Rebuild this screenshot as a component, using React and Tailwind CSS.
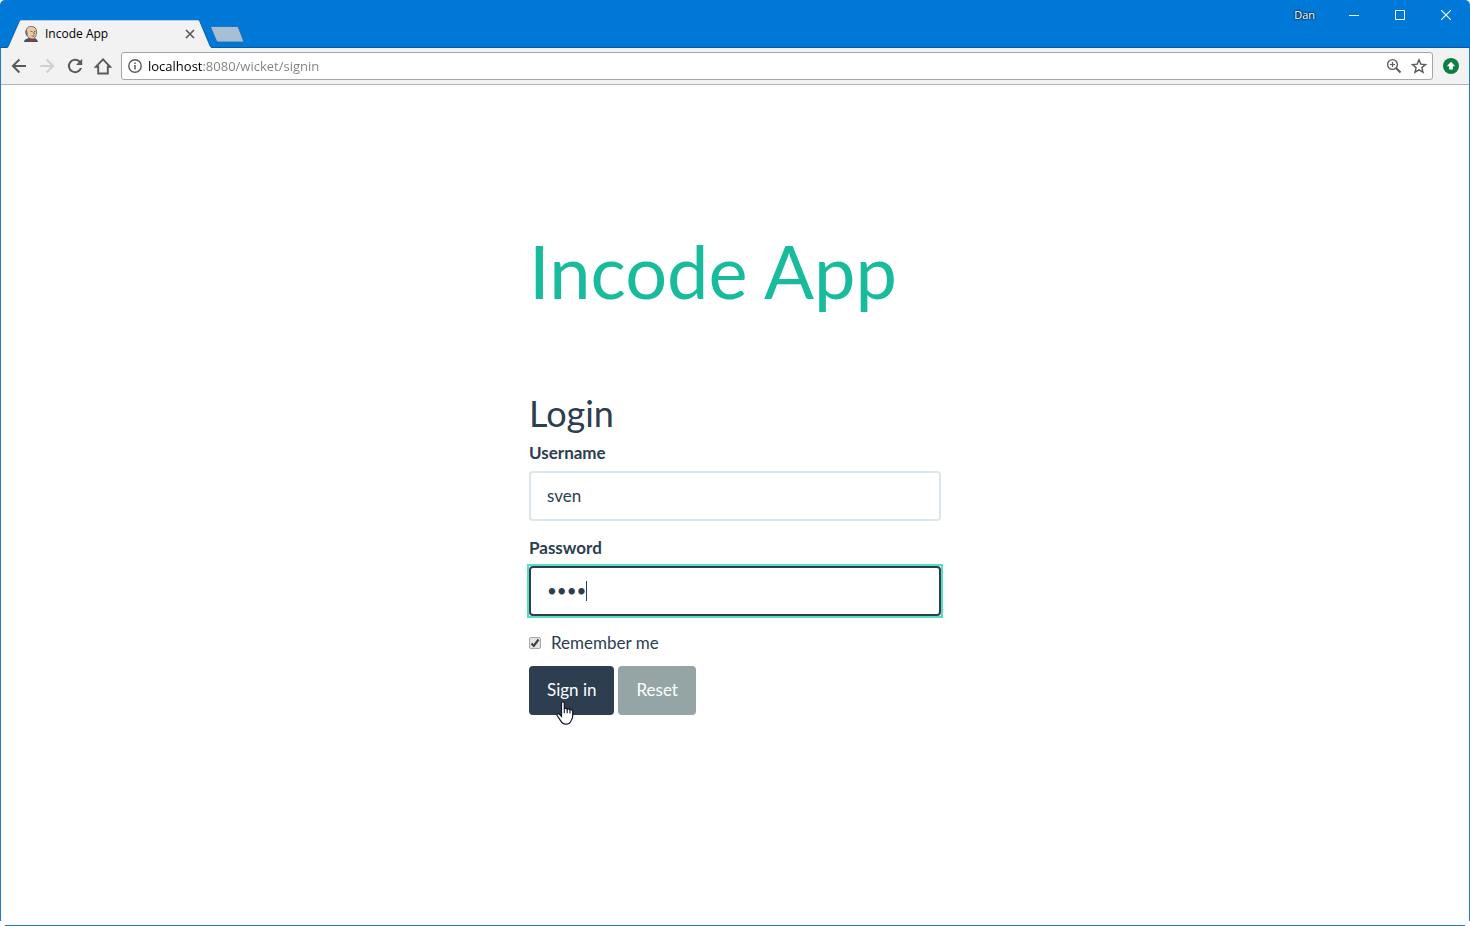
import { useState } from "react";

function TabFavicon() {
  return (
    <svg width="16" height="16" viewBox="0 0 16 16" aria-hidden="true">
      <path d="M1 16c0-2 1.500-3 3.500-3.500l2.500-1 4 .5c2 .5 3.500 1.500 4 4z" fill="#38536b" />
      <path d="M3.500 3.500C4.200 1.300 6 .4 8.300.4c3.200 0 5.200 1.900 5.200 5.300 0 3.600-1 7.300-4.300 7.300C6 13 3.600 10 3.200 7z" fill="#e8cba6" stroke="#4a4038" strokeWidth=".7" />
      <path d="M3.600 3C2.300 3.600 2 5.500 2.400 7.200c.2 1.500 1 2.600 2 3l.3-2.500L4.200 5z" fill="#77706a" />
      <path d="M7.500 5.300l2 .3M11 5.600l1.500-.3M8.500 9.800c1 .6 2.200.6 3.200 0M10.700 6l.6 2-1 .3" fill="none" stroke="#5b4a3d" strokeWidth=".8" />
      <path d="M6.500 12.800l2.600 1.200 2.600-1v3l-2.400-1.200-2.600 1.200z" fill="#d5232b" />
    </svg>
  );
}

function NavIcon({ d, color = "#5a5a5a" }) {
  return (
    <svg width="24" height="24" viewBox="0 0 24 24" aria-hidden="true">
      <path d={d} fill={color} />
    </svg>
  );
}

const paths = {
  back: "M19 11H8.300l4.800-4.800L11.700 4.800 4.500 12l7.200 7.200 1.400-1.400L8.300 13H19z",
  forward: "M5 11h10.700l-4.800-4.800 1.400-1.400 7.200 7.200-7.200 7.200-1.400-1.400 4.800-4.800H5z",
  reload:
    "M17.200 6.800A7.200 7.200 0 1 0 19 14h-2.100A5.200 5.200 0 1 1 15.700 8.300L13 11h6.200V4.800z",
};

function TitleBar() {
  return (
    <header className="flex h-12 items-stretch rounded-t-[5px] border-b border-[#0a5aa6] bg-[#0078d7]">
      <div className="relative mt-5 ml-[6px] -mb-px w-[208px] shrink-0">
        <svg className="absolute inset-0" width="208" height="28" viewBox="0 0 208 28" aria-hidden="true">
          <path d="M0 28c1.500 0 2-.6 2.600-2L13 2C13.500.7 14 0 15.500 0H191.500c1.500 0 2 .7 2.500 2l9.900 24c.6 1.400 1.600 2 3.100 2z" fill="#f2f2f2" />
          <path d="M0 27.500c1.500 0 2-.6 2.600-2L13 2C13.500.7 14-.2 15.500-.2H191.500c1.500 0 2 .9 2.500 2.200l9.900 23.500c.6 1.400 1.600 2 3.100 2" fill="none" stroke="#0a5aa6" strokeWidth=".8" />
        </svg>
        <div className="relative flex h-7 items-center pr-4 pl-[17px]">
          <TabFavicon />
          <span className="ml-[6px] grow text-[12px] leading-4 text-black">Incode App</span>
          <button aria-label="Close tab" className="flex size-4 items-center justify-center">
            <svg width="10" height="10" viewBox="0 0 10 10" aria-hidden="true">
              <path d="M1 1l8 8M9 1L1 9" stroke="#5a5a5a" strokeWidth="1.700" />
            </svg>
          </button>
        </div>
      </div>
      <button aria-label="New tab" className="-ml-1 mb-1 flex h-[17px] self-end">
        <svg width="35" height="17" viewBox="0 0 35 17" aria-hidden="true">
          <path d="M2 .5h24.500c1 0 1.500.3 2 1.200l4.800 12.500c.4 1.200 0 1.800-1 1.800H8.500c-1.200 0-1.800-.4-2.200-1.400L1 2C.6 1 1 .5 2 .5z" fill="#a6bfd4" stroke="#1c6bb0" strokeWidth=".8" />
        </svg>
      </button>
      <div className="mr-px ml-auto flex h-[30px] items-center text-white">
        <button className="mr-4 text-[11px] leading-4 [text-shadow:0_0_2px_#111,0_0_2px_#111]">Dan</button>
        <button aria-label="Minimize" className="flex h-full w-[46px] items-center justify-center">
          <svg width="10" height="10" viewBox="0 0 10 10" aria-hidden="true"><path d="M0 5.500h10" stroke="white" /></svg>
        </button>
        <button aria-label="Maximize" className="flex h-full w-[46px] items-center justify-center">
          <svg width="10" height="10" viewBox="0 0 10 10" aria-hidden="true"><path d="M.5.5h9v9h-9z" fill="none" stroke="white" /></svg>
        </button>
        <button aria-label="Close" className="flex h-full w-[46px] items-center justify-center">
          <svg width="10" height="10" viewBox="0 0 10 10" aria-hidden="true"><path d="M0 0l10 10M10 0L0 10" stroke="white" strokeWidth="1.100" /></svg>
        </button>
      </div>
    </header>
  );
}

function Toolbar() {
  const [url, setUrl] = useState("localhost:8080/wicket/signin");
  return (
    <nav className="flex h-[37px] items-center border-b border-[#b4b4b4] bg-[#f2f2f2] pr-[10px] pl-[6px]">
      <div className="flex w-[114px] gap-1">
        <button aria-label="Back"><NavIcon d={paths.back} /></button>
        <button aria-label="Forward"><NavIcon d={paths.forward} color="#d0d0d0" /></button>
        <button aria-label="Reload"><NavIcon d={paths.reload} /></button>
        <button aria-label="Home">
          <svg width="24" height="24" viewBox="0 0 24 24" aria-hidden="true">
            <path d="M4.800 12.800L12 5.300l7.200 7.500h-2.400v6.700H7.200v-6.700z" fill="none" stroke="#5a5a5a" strokeWidth="1.900" />
          </svg>
        </button>
      </div>
      <div className="flex h-7 grow items-center rounded-[3px] border border-[#a6a6a6] bg-white pr-[5px] pl-[6px]">
        <svg width="14" height="14" viewBox="0 0 14 14" aria-hidden="true">
          <circle cx="7" cy="7" r="6.200" fill="none" stroke="#5a5a5a" strokeWidth="1.400" />
          <path d="M7 6v4.500M7 3.500v1.600" stroke="#5a5a5a" strokeWidth="1.500" />
        </svg>
        <input
          aria-label="Address"
          value={url}
          onChange={(e) => setUrl(e.target.value)}
          className="ml-[6px] h-6 min-w-0 grow bg-[linear-gradient(90deg,#000_55px,#808080_55px)] bg-clip-text text-[13px] leading-5 text-transparent outline-none"
        />
        <button aria-label="Zoom">
          <svg width="16" height="16" viewBox="0 0 16 16" aria-hidden="true">
            <circle cx="6.500" cy="6.500" r="4.900" fill="none" stroke="#5a5a5a" strokeWidth="1.300" />
            <path d="M6.500 4v5M4 6.500h5" stroke="#5a5a5a" strokeWidth="1.200" />
            <path d="M10 10l4.500 4.500" stroke="#5a5a5a" strokeWidth="1.900" />
          </svg>
        </button>
        <button aria-label="Bookmark" className="ml-[9px]">
          <svg width="16" height="16" viewBox="0 0 16 16" aria-hidden="true">
            <path d="M8 1.800l1.800 4.300 4.700.4-3.600 3.100 1.100 4.600L8 11.800l-4 2.400 1.100-4.600L1.500 6.500l4.700-.4z" fill="none" stroke="#5a5a5a" strokeWidth="1.400" />
          </svg>
        </button>
      </div>
      <button aria-label="Updates" className="ml-[10px]">
        <svg width="16" height="16" viewBox="0 0 16 16" aria-hidden="true">
          <circle cx="8" cy="8" r="8" fill="#0b8043" />
          <path d="M8 3.800l4.200 4.400H9.900V11.500H6.100V8.200H3.800z" fill="white" />
        </svg>
      </button>
    </nav>
  );
}

function HandPointer() {
  return (
    <svg className="pointer-events-none absolute top-[35px] left-[27px]" width="18" height="24" viewBox="0 0 18 24" aria-hidden="true">
      <path
        d="M5.500 2.500C5.500 1.300 6 .8 6.900.8s1.400.6 1.400 1.700v5.300c.3-.7 2.600-.8 2.900.6.500-.8 2.500-.6 2.800.7.800-.7 2.700-.4 2.700 1.400v4.700c0 2-1 3.200-1.500 4.200-.7 2.400-3 3.800-5.500 3.800-2.600 0-4-1.400-5-3.400L1.100 14.500c-.6-1.200.6-2.500 2.100-1.500l2.300 2.300z"
        fill="white"
        stroke="#15152b"
        strokeWidth="1.200"
      />
      <path d="M8.300 7.500v4.800M11.200 8.500v3.800M14 9.500v3" stroke="#15152b" strokeWidth="1.100" />
    </svg>
  );
}

const inputBase =
  "block h-[50px] w-full rounded-[4px] border-2 bg-white px-4 pb-[2px] text-[17px] leading-6 text-[#2c3e50]";
const buttonBase = "rounded-[4px] px-[18px] pt-3 pb-[13px]";

function LoginForm() {
  const [username, setUsername] = useState("sven");
  const [password, setPassword] = useState("pass");
  const [remember, setRemember] = useState(true);
  return (
    <form onSubmit={(e) => e.preventDefault()}>
      <h2 className="mb-[6px] text-[36px] leading-[44px]">Login</h2>
      <div className="mb-[15px]">
        <label htmlFor="username" className="mb-[6px] block font-bold">Username</label>
        <input
          id="username"
          value={username}
          onChange={(e) => setUsername(e.target.value)}
          className={inputBase + " border-[#dce4ec] outline-none"}
        />
      </div>
      <div className="mb-[15px]">
        <label htmlFor="password" className="mb-[6px] block font-bold">Password</label>
        <div className="relative bg-white shadow-[0_0_0_2px_#55e0c0]">
          <input
            id="password"
            type="password"
            value={password}
            onChange={(e) => setPassword(e.target.value)}
            className={inputBase + " border-[#2c3e50] caret-transparent outline-none"}
          />
          <span className="absolute top-[15px] left-[57px] h-5 w-px bg-[#2c3e50]" />
        </div>
      </div>
      <label className="relative mb-[11px] flex items-center gap-[10px]">
        <input
          type="checkbox"
          checked={remember}
          onChange={(e) => setRemember(e.target.checked)}
          className="sr-only"
        />
        <span className="flex size-3 items-center justify-center rounded-[2px] border border-[#a9a9a9] bg-[#e4e4e4]">
          {remember && (
            <svg width="10" height="10" viewBox="0 0 10 10" className="shrink-0" aria-hidden="true">
              <path d="M1.500 5.500l2.300 2.300L8.500 1.500" fill="none" stroke="#404040" strokeWidth="2.200" />
            </svg>
          )}
        </span>
        Remember me
      </label>
      <div className="flex gap-1 text-white">
        <div className="relative">
          <button type="submit" className={buttonBase + " bg-[#2c3e50]"}>Sign in</button>
          <HandPointer />
        </div>
        <button type="reset" className={buttonBase + " bg-[#95a5a6]"}>Reset</button>
      </div>
    </form>
  );
}

export default function App() {
  return (
    <div className="flex min-h-screen flex-col bg-white font-['Open_Sans','Noto_Sans',sans-serif]">
      <TitleBar />
      <div className="mb-1 grow border-x border-[#1a7fd4]">
        <Toolbar />
        <main className="mx-auto w-[412px] pt-[144px] font-[Lato,sans-serif] text-[17px] leading-6 text-[#2c3e50]">
          <h1 className="mb-[78px] text-[74px] leading-[84px] whitespace-nowrap text-[#18bc9c]">Incode App</h1>
          <LoginForm />
        </main>
      </div>
      <div className="mx-[5px] h-px bg-[#1a7fd4]" />
    </div>
  );
}
